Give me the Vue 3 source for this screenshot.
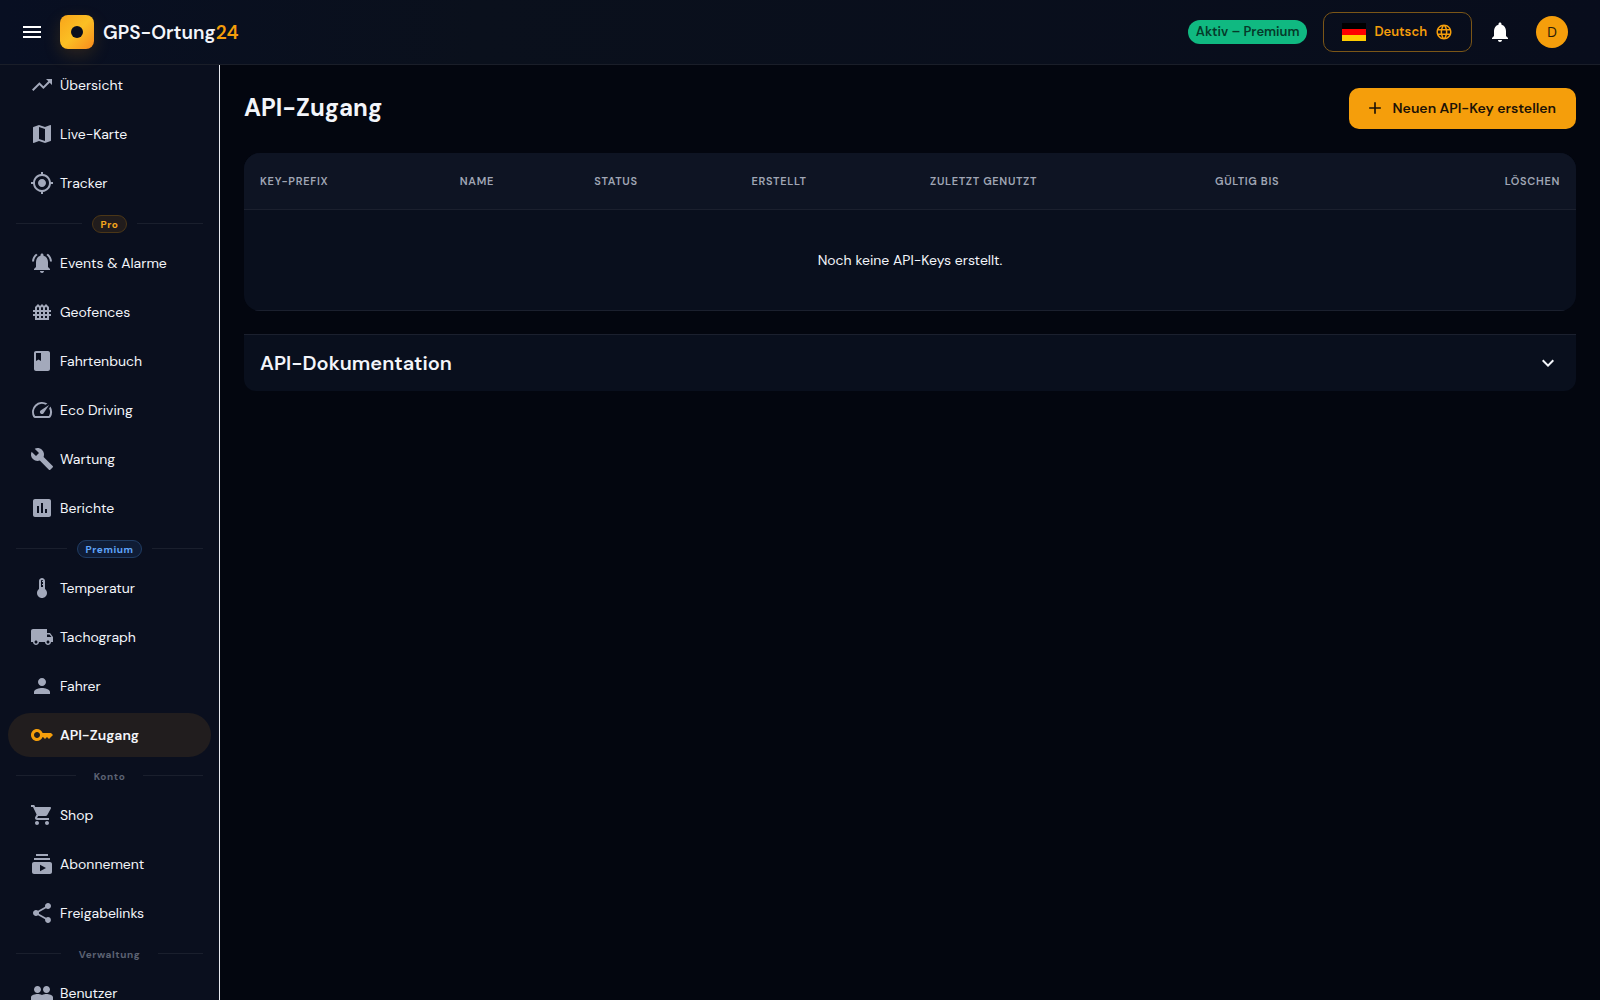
<script setup>
import { ref } from 'vue'

const icons = {
  trending: 'm16 6 2.29 2.29-4.88 4.88-4-4L2 16.59 3.41 18l6-6 4 4 6.3-6.29L22 12V6z',
  map: 'm20.5 3-.16.03L15 5.1 9 3 3.36 4.9c-.21.07-.36.25-.36.48V20.5c0 .28.22.5.5.5l.16-.03L9 18.9l6 2.1 5.64-1.9c.21-.07.36-.25.36-.48V3.5c0-.28-.22-.5-.5-.5M15 19l-6-2.11V5l6 2.11z',
  tracker: 'M12 8c-2.21 0-4 1.79-4 4s1.79 4 4 4 4-1.79 4-4-1.79-4-4-4m8.94 3c-.46-4.17-3.77-7.48-7.94-7.94V1h-2v2.06C6.83 3.52 3.52 6.83 3.06 11H1v2h2.06c.46 4.17 3.77 7.48 7.94 7.94V23h2v-2.06c4.17-.46 7.48-3.77 7.94-7.94H23v-2zM12 19c-3.87 0-7-3.13-7-7s3.13-7 7-7 7 3.13 7 7-3.13 7-7 7',
  alarm: 'M7.58 4.08 6.15 2.65C3.75 4.48 2.17 7.3 2.03 10.5h2c.15-2.65 1.51-4.97 3.55-6.42m12.39 6.42h2c-.15-3.2-1.73-6.02-4.12-7.85l-1.42 1.43c2.02 1.45 3.39 3.77 3.54 6.42M18 11c0-3.07-1.64-5.64-4.5-6.32V4c0-.83-.67-1.5-1.5-1.5s-1.5.67-1.5 1.5v.68C7.63 5.36 6 7.92 6 11v5l-2 2v1h16v-1l-2-2zm-6 11c.14 0 .27-.01.4-.04.65-.14 1.18-.58 1.44-1.18.1-.24.15-.5.15-.78h-4c.01 1.1.9 2 2.01 2',
  fence: 'M21 12v-2h-2V7l-3-3-2 2-2-2-2 2-2-2-3 3v3H3v2h2v2H3v2h2v4h14v-4h2v-2h-2v-2zm-5-5.17 1 1V10h-2V7.83zm-4 0 1 1V10h-2V7.83zM11 14v-2h2v2zm2 2v2h-2v-2zM7 7.83l1-1 1 1V10H7zM7 12h2v2H7zm0 4h2v2H7zm10 2h-2v-2h2zm0-4h-2v-2h2z',
  book: 'M18 2H6c-1.1 0-2 .9-2 2v16c0 1.100.9 2 2 2h12c1.100 0 2-.9 2-2V4c0-1.100-.9-2-2-2M6 4h5v8l-2.500-1.500L6 12z',
  speed: 'm20.380 8.570-1.230 1.850a8 8 0 0 1-.220 7.580H5.070A8 8 0 0 1 15.580 6.850l1.850-1.230A10 10 0 0 0 3.350 19a2 2 0 0 0 1.720 1h13.850a2 2 0 0 0 1.740-1 10 10 0 0 0-.27-10.440zm-9.790 6.840a2 2 0 0 0 2.830 0l5.660-8.490-8.490 5.660a2 2 0 0 0 0 2.830',
  wrench: 'm22.700 19-9.100-9.100c.9-2.300.4-5-1.500-6.900-2-2-5-2.400-7.400-1.300L9 6 6 9 1.600 4.700C.4 7.100.9 10.100 2.900 12.100c1.900 1.900 4.600 2.400 6.900 1.500l9.100 9.100c.4.4 1 .4 1.400 0l2.300-2.300c.5-.4.5-1.100.1-1.400',
  chart: 'M19 3H5c-1.100 0-2 .9-2 2v14c0 1.100.9 2 2 2h14c1.100 0 2-.9 2-2V5c0-1.100-.9-2-2-2M9 17H7v-7h2zm4 0h-2V7h2zm4 0h-2v-4h2z',
  thermo: 'M15 13V5c0-1.660-1.340-3-3-3S9 3.340 9 5v8c-1.210.91-2 2.370-2 4 0 2.760 2.240 5 5 5s5-2.240 5-5c0-1.630-.79-3.090-2-4m-4-8c0-.55.45-1 1-1s1 .45 1 1h-1v1h1v2h-1v1h1v2h-2z',
  truck: 'M20 8h-3V4H3c-1.100 0-2 .9-2 2v11h2c0 1.660 1.340 3 3 3s3-1.340 3-3h6c0 1.660 1.340 3 3 3s3-1.340 3-3h2v-5zM6 18.500c-.83 0-1.500-.67-1.500-1.500s.67-1.500 1.500-1.500 1.500.67 1.500 1.500-.67 1.500-1.500 1.500m13.500-9 1.960 2.500H17V9.500zm-1.500 9c-.83 0-1.500-.67-1.500-1.500s.67-1.500 1.500-1.500 1.500.67 1.500 1.500-.67 1.500-1.500 1.500',
  person: 'M12 12c2.210 0 4-1.790 4-4s-1.790-4-4-4-4 1.790-4 4 1.790 4 4 4m0 2c-2.670 0-8 1.340-8 4v2h16v-2c0-2.660-5.330-4-8-4',
  key: 'M21 10h-8.350C11.830 7.670 9.610 6 7 6c-3.310 0-6 2.690-6 6s2.690 6 6 6c2.610 0 4.830-1.670 5.650-4H13l2 2 2-2 2 2 4-4.040zM7 15c-1.650 0-3-1.350-3-3s1.350-3 3-3 3 1.350 3 3-1.350 3-3 3',
  cart: 'M7 18c-1.100 0-1.990.9-1.990 2S5.900 22 7 22s2-.9 2-2-.9-2-2-2M1 2v2h2l3.600 7.590-1.350 2.450c-.16.28-.25.61-.25.96 0 1.100.9 2 2 2h12v-2H7.420c-.14 0-.25-.11-.25-.25l.03-.12.9-1.630h7.450c.75 0 1.410-.41 1.750-1.030l3.580-6.490c.08-.14.12-.31.12-.48 0-.55-.45-1-1-1H5.210l-.94-2zm16 16c-1.100 0-1.990.9-1.990 2s.89 2 1.990 2 2-.9 2-2-.9-2-2-2',
  subscription: 'M20 8H4V6h16zm-2-6H6v2h12zm4 10v8c0 1.100-.9 2-2 2H4c-1.100 0-2-.9-2-2v-8c0-1.100.9-2 2-2h16c1.100 0 2 .9 2 2m-6 4-6-3.270v6.530z',
  share: 'M18 16.080c-.76 0-1.440.3-1.960.77L8.910 12.700c.05-.23.09-.46.09-.7s-.04-.47-.09-.7l7.050-4.110c.54.5 1.250.81 2.040.81 1.660 0 3-1.340 3-3s-1.340-3-3-3-3 1.340-3 3c0 .24.04.47.09.7L8.040 9.810C7.500 9.310 6.790 9 6 9c-1.660 0-3 1.340-3 3s1.340 3 3 3c.79 0 1.500-.31 2.040-.81l7.120 4.160c-.05.21-.08.43-.08.65 0 1.610 1.310 2.920 2.920 2.920s2.920-1.310 2.920-2.920-1.310-2.920-2.920-2.920',
  people: 'M16.500 13c-1.200 0-3.070.34-4.500 1-1.430-.67-3.300-1-4.500-1C5.330 13 1 14.080 1 16.250V19h22v-2.750c0-2.170-4.330-3.250-6.500-3.250M7.500 12C9.430 12 11 10.430 11 8.500S9.430 5 7.500 5 4 6.570 4 8.500 5.570 12 7.500 12m9 0c1.930 0 3.500-1.570 3.500-3.500S18.430 5 16.500 5 13 6.570 13 8.500s1.570 3.500 3.500 3.500',
}

const groups = [
  { items: [['Übersicht', 'trending'], ['Live-Karte', 'map'], ['Tracker', 'tracker']] },
  {
    label: 'Pro',
    tone: 'pro',
    items: [
      ['Events & Alarme', 'alarm'],
      ['Geofences', 'fence'],
      ['Fahrtenbuch', 'book'],
      ['Eco Driving', 'speed'],
      ['Wartung', 'wrench'],
      ['Berichte', 'chart'],
    ],
  },
  {
    label: 'Premium',
    tone: 'premium',
    items: [
      ['Temperatur', 'thermo'],
      ['Tachograph', 'truck'],
      ['Fahrer', 'person'],
      ['API-Zugang', 'key'],
    ],
  },
  { label: 'Konto', tone: 'plain', items: [['Shop', 'cart'], ['Abonnement', 'subscription'], ['Freigabelinks', 'share']] },
  { label: 'Verwaltung', tone: 'plain', items: [['Benutzer', 'people']] },
]

const columns = ['Key-Prefix', 'Name', 'Status', 'Erstellt', 'Zuletzt genutzt', 'Gültig bis', 'Löschen']
const active = ref('API-Zugang')
const docsOpen = ref(false)
</script>

<template>
  <div class="shell">
    <header class="topbar">
      <button class="icon-btn" type="button" aria-label="Menü">
        <svg class="icon" viewBox="0 0 24 24"><path d="M3 18h18v-2H3zm0-5h18v-2H3zm0-7v2h18V6z" /></svg>
      </button>
      <a class="brand" href="#">
        <span class="logo"><span class="logo-dot"></span></span>
        <span class="brand-name">GPS-Ortung<span class="brand-accent">24</span></span>
      </a>
      <div class="top-actions">
        <span class="plan">Aktiv – Premium</span>
        <button class="language" type="button">
          <svg class="flag" viewBox="0 0 24 18">
            <path fill="#000" d="M0 0h24v6H0z" />
            <path fill="#f00" d="M0 6h24v6H0z" />
            <path fill="#fc0" d="M0 12h24v6H0z" />
          </svg>
          <span>Deutsch</span>
          <svg class="icon globe" viewBox="0 0 24 24"><path d="M11.990 2C6.470 2 2 6.480 2 12s4.470 10 9.990 10C17.520 22 22 17.520 22 12S17.520 2 11.990 2m6.930 6h-2.950c-.32-1.250-.78-2.450-1.380-3.560 1.840.63 3.370 1.910 4.330 3.560M12 4.040c.83 1.200 1.480 2.530 1.910 3.960h-3.820c.43-1.430 1.080-2.760 1.910-3.960M4.260 14C4.100 13.360 4 12.690 4 12s.1-1.360.26-2h3.380c-.08.66-.14 1.320-.14 2s.06 1.340.14 2zm.82 2h2.950c.32 1.250.78 2.450 1.380 3.560-1.840-.63-3.370-1.900-4.330-3.560m2.950-8H5.080c.96-1.660 2.490-2.930 4.330-3.560C8.810 5.550 8.350 6.750 8.030 8M12 19.960c-.83-1.200-1.480-2.530-1.910-3.960h3.820c-.43 1.430-1.080 2.760-1.910 3.960M14.340 14H9.660c-.09-.66-.16-1.320-.16-2s.07-1.350.16-2h4.680c.09.65.16 1.320.16 2s-.07 1.340-.16 2m.25 5.560c.6-1.110 1.060-2.310 1.380-3.560h2.950c-.96 1.650-2.490 2.930-4.330 3.560M16.360 14c.08-.66.14-1.320.14-2s-.06-1.340-.14-2h3.380c.16.64.26 1.310.26 2s-.1 1.360-.26 2z" /></svg>
        </button>
        <button class="icon-btn bell" type="button" aria-label="Benachrichtigungen">
          <svg class="icon" viewBox="0 0 24 24"><path d="M12 22c1.100 0 2-.9 2-2h-4c0 1.100.89 2 2 2m6-6v-5c0-3.070-1.640-5.640-4.500-6.320V4c0-.83-.67-1.500-1.500-1.500s-1.500.67-1.500 1.500v.68C7.630 5.360 6 7.920 6 11v5l-2 2v1h16v-1z" /></svg>
        </button>
        <button class="avatar" type="button">D</button>
      </div>
    </header>

    <div class="body">
      <nav class="sidebar" aria-label="Hauptnavigation">
        <div class="nav-scroll">
          <section v-for="(group, i) in groups" :key="i">
            <div v-if="group.label" class="divider">
              <span class="divider-label" :class="group.tone">{{ group.label }}</span>
            </div>
            <a
              v-for="[label, icon] in group.items"
              :key="label"
              class="nav-item"
              :class="{ active: active === label }"
              href="#"
              @click.prevent="active = label"
            >
              <svg class="icon" viewBox="0 0 24 24"><path fill-rule="evenodd" :d="icons[icon]" /></svg>
              <span>{{ label }}</span>
            </a>
          </section>
        </div>
      </nav>

      <main class="content">
        <div class="page-head">
          <h1>API-Zugang</h1>
          <button class="primary" type="button">
            <svg class="icon plus" viewBox="0 0 24 24"><path d="M19 13h-6v6h-2v-6H5v-2h6V5h2v6h6z" /></svg>
            <span>Neuen API-Key erstellen</span>
          </button>
        </div>

        <div class="card">
          <table>
            <thead>
              <tr>
                <th v-for="column in columns" :key="column" scope="col">{{ column }}</th>
              </tr>
            </thead>
            <tbody>
              <tr>
                <td :colspan="columns.length">Noch keine API-Keys erstellt.</td>
              </tr>
            </tbody>
          </table>
        </div>

        <section class="docs">
          <button class="docs-toggle" type="button" :aria-expanded="docsOpen" @click="docsOpen = !docsOpen">
            <span>API-Dokumentation</span>
            <svg class="icon" viewBox="0 0 24 24"><path d="M16.590 8.590 12 13.170 7.410 8.590 6 10l6 6 6-6z" /></svg>
          </button>
        </section>
      </main>
    </div>
  </div>
</template>

<style>
body {
  margin: 0;
  background: #03060f;
}
</style>

<style scoped>
.shell {
  display: flex;
  flex-direction: column;
  height: 100vh;
  overflow: hidden;
  color: #f3f5fa;
  background: #03060f;
  font-family: "DM Sans", Inter, "Liberation Sans", sans-serif;
  font-size: 14px;
  line-height: 20px;
}

.shell *,
.shell *::before,
.shell *::after {
  box-sizing: border-box;
}

button {
  margin: 0;
  padding: 0;
  border: 0;
  background: none;
  color: inherit;
  font: inherit;
  cursor: pointer;
}

a {
  color: inherit;
  text-decoration: none;
}

.icon {
  display: block;
  flex: none;
  width: 24px;
  height: 24px;
  fill: currentColor;
}

.topbar {
  display: flex;
  flex: none;
  align-items: center;
  z-index: 1;
  height: 65px;
  padding: 0 32px 0 20px;
  border-bottom: 1px solid #1a1e29;
  background: linear-gradient(90deg, #080f22, #0a101c 30%, #080d1c);
}

.icon-btn {
  color: #fff;
}

.brand {
  display: flex;
  align-items: center;
  gap: 9px;
  margin-left: 16px;
}

.logo {
  display: grid;
  place-items: center;
  width: 34px;
  height: 34px;
  border-radius: 8px;
  background: linear-gradient(135deg, #f9a51a, #fbbf24 50%, #f98a1c);
  box-shadow: 0 6px 18px rgba(245, 158, 11, 0.16);
}

.logo-dot {
  width: 12px;
  height: 12px;
  border-radius: 50%;
  background: #0a0f1e;
}

.brand-name {
  padding-top: 2px;
  font-size: 19px;
  font-weight: 600;
}

.brand-accent {
  color: #f59e0b;
}

.top-actions {
  display: flex;
  align-items: center;
  margin-left: auto;
}

.plan {
  height: 24px;
  padding: 0 8px;
  border-radius: 12px;
  background: #10b981;
  color: #053a2a;
  font-size: 13px;
  font-weight: 600;
  line-height: 24px;
}

.language {
  display: flex;
  align-items: center;
  gap: 8px;
  height: 40px;
  margin-left: 16px;
  padding: 0 18px;
  border: 1px solid #7b5617;
  border-radius: 10px;
  color: #f59e0b;
  font-size: 13px;
  font-weight: 600;
}

.flag {
  width: 24px;
  height: 18px;
}

.globe {
  width: 18px;
  height: 18px;
}

.bell {
  margin-left: 16px;
}

.avatar {
  width: 32px;
  height: 32px;
  margin-left: 24px;
  border-radius: 50%;
  background: #f59e0b;
  color: #2a1c06;
}

.body {
  display: flex;
  flex: 1;
  min-height: 0;
}

.sidebar {
  flex: none;
  width: 220px;
  overflow: hidden;
  border-right: 1px solid #e8eaf0;
  background: #0a0f1e;
}

.nav-scroll {
  margin-top: -2px;
}

.nav-item {
  display: flex;
  align-items: center;
  gap: 6px;
  height: 44px;
  margin: 0 8px 5px;
  padding: 0 22px;
  border-radius: 22px;
}

.nav-item .icon {
  color: #a3a9bb;
}

.nav-item.active {
  background: #211d1e;
  font-weight: 600;
}

.nav-item.active .icon {
  color: #f59e0b;
}

.divider {
  display: flex;
  align-items: center;
  gap: 10px;
  height: 27px;
  margin: 0 16px 4px;
}

.divider::before,
.divider::after {
  content: "";
  flex: 1;
  height: 1px;
  background: #1a1f2d;
}

.divider-label {
  height: 18px;
  padding: 0 7px;
  border: 1px solid transparent;
  border-radius: 9px;
  font-size: 10px;
  font-weight: 700;
  letter-spacing: 0.06em;
  line-height: 17px;
}

.divider-label.pro {
  border-color: #4b3617;
  background: #211c1c;
  color: #f5a71c;
}

.divider-label.premium {
  border-color: #203c63;
  background: #0f1c35;
  color: #60a5fa;
}

.divider-label.plain {
  color: #5c6273;
}

.content {
  flex: 1;
  min-width: 0;
  padding: 23px 24px;
}

.page-head {
  display: flex;
  align-items: center;
  justify-content: space-between;
  margin-bottom: 24px;
}

h1 {
  margin: 0;
  padding-bottom: 2px;
  font-size: 24px;
  font-weight: 700;
  line-height: 32px;
}

.primary {
  display: flex;
  align-items: center;
  gap: 8px;
  height: 41px;
  padding: 0 20px 1px 16px;
  border-radius: 10px;
  background: #f59e0b;
  color: #1c1206;
  font-weight: 600;
}

.plus {
  width: 20px;
  height: 20px;
}

.card {
  overflow: hidden;
  border-radius: 16px;
  background: #090f1d;
}

table {
  width: 100%;
  border-collapse: separate;
  border-spacing: 0;
  table-layout: fixed;
}

th,
td {
  border-bottom: 1px solid #1b202e;
}

th {
  height: 57px;
  padding: 0 16px;
  background: #0e1423;
  color: #a0a6b5;
  font-size: 11px;
  font-weight: 600;
  letter-spacing: 0.06em;
  text-align: left;
  text-transform: uppercase;
  white-space: nowrap;
}

th:nth-child(1) { width: 15%; }
th:nth-child(2) { width: 10.1%; }
th:nth-child(3) { width: 11.8%; }
th:nth-child(4) { width: 13.4%; }
th:nth-child(5) { width: 21.4%; }
th:nth-child(6) { width: 14%; }
th:last-child { text-align: right; }

td {
  height: 101px;
  padding: 0;
  text-align: center;
}

.docs {
  margin-top: 23px;
  overflow: hidden;
  border-top: 1px solid #1b202e;
  border-radius: 0 0 12px 12px;
  background: #090f1d;
}

.docs-toggle {
  display: flex;
  align-items: center;
  justify-content: space-between;
  width: 100%;
  height: 56px;
  padding: 0 16px;
  font-size: 20px;
  font-weight: 600;
}
</style>
